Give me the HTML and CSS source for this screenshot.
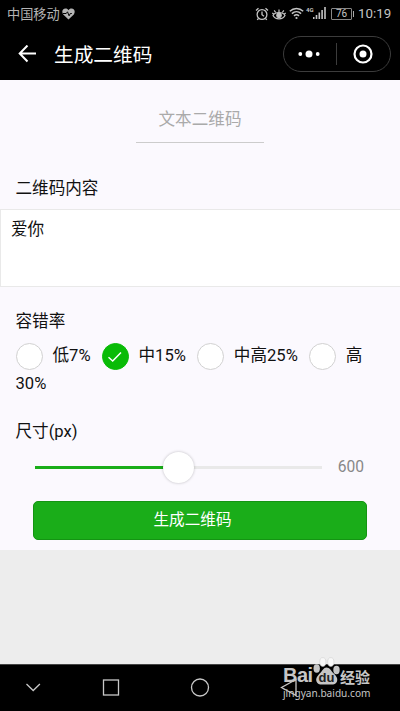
FILE: index.html
```html
<!DOCTYPE html>
<html lang="zh-CN">
<head>
  <meta charset="UTF-8">
  <meta name="viewport" content="width=device-width, initial-scale=1.0">
  <title>生成二维码</title>
  <link rel="stylesheet" href="styles.css">
</head>
<body>
  <div class="status-bar">
    <span class="carrier">中国移动</span>
    <svg class="heart" width="13" height="12" viewBox="0 0 13 12">
      <path d="M6.500 11.600 1.200 6.400C-.6 4 .4.5 3.500.5c1.400 0 2.400.7 3 1.700.6-1 1.600-1.700 3-1.700 3.100 0 4.100 3.500 2.300 5.900z" fill="#b4b4b4"/>
      <path d="M1 5.500h3.200l1.300-1.700 1.600 4 1.200-2.300h1.500" fill="none" stroke="#000" stroke-width="1"/>
    </svg>
    <div class="status-icons">
      <svg class="icon-alarm" width="14" height="14" viewBox="0 0 14 14" fill="none" stroke="#c4c4c4" stroke-width="1.300">
        <circle cx="7" cy="7.500" r="4.900"/>
        <path d="M7 4.500v3.200l2 1.500M1 3.600 3.500 1.300M13 3.600l-2.500-2.300M3.500 11.500l-1.300 1.400M10.500 11.500l1.300 1.400"/>
      </svg>
      <svg class="icon-eye" width="14" height="14" viewBox="0 0 14 14" fill="none" stroke="#c4c4c4" stroke-width="1.200">
        <path d="M1 8.500C3.200 4.500 10.800 4.500 13 8.500 10.800 12.900 3.200 12.900 1 8.500z"/>
        <circle cx="7" cy="8.300" r="2.200" fill="#c4c4c4"/>
        <path d="M7 5V2.500M3.700 5.500 2.200 3.300M10.300 5.500l1.500-2.200M1.800 7.300.3 6M12.200 7.300 13.700 6"/>
      </svg>
      <svg class="icon-wifi" width="15" height="13" viewBox="0 0 15 13" fill="none" stroke="#c4c4c4" stroke-width="1.500">
        <path d="M.8 4.300c3.900-3.800 9.500-3.800 13.400 0M2.900 6.600c2.700-2.600 6.500-2.600 9.200 0M5 8.900c1.500-1.400 3.500-1.400 5 0"/>
        <circle cx="7.500" cy="11" r="1.100" fill="#c4c4c4" stroke="none"/>
      </svg>
      <div class="signal">
        <span class="network">4G</span>
        <svg width="13" height="12" viewBox="0 0 13 12" fill="#c4c4c4">
          <path d="M0 10h1.500v2H0zM2.700 8h1.600v4H2.700zM5.500 5.500h1.600V12H5.500zM8.300 3h1.600v9H8.300zM11.200 0h1.600v12h-1.600z"/>
        </svg>
      </div>
      <span class="battery">76</span>
      <span class="clock">10:19</span>
    </div>
  </div>

  <header class="nav-bar">
    <svg class="back" width="19" height="18" viewBox="0 0 19 18" fill="none" stroke="#fff" stroke-width="2">
      <path d="M18 8.500H2M9.500.5 1.700 8.500l7.800 8"/>
    </svg>
    <h1>生成二维码</h1>
    <div class="capsule">
      <svg width="22" height="8" viewBox="0 0 22 8" fill="#fff">
        <circle cx="2.300" cy="4" r="1.900"/>
        <circle cx="11" cy="4" r="3.500"/>
        <circle cx="19.700" cy="4" r="1.900"/>
      </svg>
      <span class="divider"></span>
      <svg width="20" height="20" viewBox="0 0 20 20">
        <circle cx="10" cy="10" r="8.500" fill="none" stroke="#fff" stroke-width="2.200"/>
        <circle cx="10" cy="10" r="3.500" fill="#fff"/>
      </svg>
    </div>
  </header>

  <main>
    <div class="tab">文本二维码</div>
    <form class="qr-form">
      <h2>二维码内容</h2>
      <div class="content-box">爱你</div>
      <h2 class="level-title">容错率</h2>
      <div class="levels">
        <label><i class="radio"></i>低7%</label>
        <label><i class="radio checked"><svg width="16" height="12" viewBox="0 0 16 12" fill="none" stroke="#fff" stroke-width="1.500"><path d="M1.500 6.300 5.700 10 14 1.500"/></svg></i>中15%</label>
        <label><i class="radio"></i>中高25%</label>
        <label><i class="radio"></i>高<br>30%</label>
      </div>
      <h2 class="size-title">尺寸(px)</h2>
      <div class="slider">
        <div class="track"><div class="track-fill"></div><div class="handle"></div></div>
        <span class="size-value">600</span>
      </div>
      <button type="button" class="submit">生成二维码</button>
    </form>
  </main>

  <footer class="system-nav">
    <svg width="400" height="46" viewBox="0 0 400 46" fill="none" stroke="#c8c8c8" stroke-width="1.300">
      <path d="M26.500 19l6.700 6.500 6.700-6.500"/>
      <rect x="103.500" y="15" width="15" height="15"/>
      <circle cx="200" cy="22.500" r="8.500"/>
      <path d="M296 14.500v16l-14.500-8z"/>
    </svg>
    <div class="watermark">
      <div class="brand">
        <span class="bai">Bai</span>
        <svg class="paw" width="27" height="29" viewBox="0 0 27 29" fill="#c6c6c6">
          <ellipse cx="3.700" cy="11.500" rx="3.200" ry="4.200"/>
          <ellipse cx="9.800" cy="5" rx="3.100" ry="4.400" class="toe"/>
          <ellipse cx="17.800" cy="5" rx="3.100" ry="4.400" class="toe"/>
          <ellipse cx="23.500" cy="13" rx="3.200" ry="4.200"/>
          <path d="M13.500 10.500c3 0 4.500 3 6.500 5.300 3.500 3.300 5 5.700 4 8.700-1.400 4-5.500 3-10.500 3s-8.500 1-10-3c-1-3 .8-5.400 3.700-8.400 2.200-2.400 3.300-5.600 6.300-5.600z"/>
          <text x="13.500" y="25" text-anchor="middle" class="du">du</text>
        </svg>
        <span class="jingyan">经验</span>
      </div>
      <div class="url">jingyan.baidu.com</div>
    </div>
  </footer>
</body>
</html>
```

FILE: styles.css
```css
:root {
  --main-font: Roboto, "Noto Sans CJK SC", sans-serif;
  --page-color: #fbf9fe;
  --green: #1aad19;
  --status-color: #c4c4c4;
}

html {
  box-sizing: border-box;
  font-family: var(--main-font);
  font-size: 16.6px;
}

*,
*::before,
*::after {
  box-sizing: inherit;
}

body {
  margin: 0;
  height: 711px;
  display: flex;
  flex-direction: column;
  overflow: hidden;
  background-color: #ededed;
  color: #111;
}

h1,
h2 {
  margin: 0;
  font-weight: normal;
}

.status-bar {
  display: flex;
  align-items: center;
  height: 28px;
  padding: 0 9px 0 7px;
  background-color: #000;
  color: var(--status-color);
}

.carrier {
  margin-top: -2px;
  font-size: 13.2px;
  color: #b4b4b4;
}

.heart {
  margin-left: 2px;
}

.status-icons {
  display: flex;
  align-items: center;
  margin-left: auto;
}

.icon-alarm,
.icon-eye,
.icon-wifi {
  margin-top: -1px;
}

.icon-eye {
  margin-left: 3px;
}

.icon-wifi {
  margin-left: 3px;
}

.signal {
  display: flex;
  align-items: flex-end;
  margin: -2px 0 0 2px;
}

.network {
  align-self: flex-start;
  width: 7px;
  font-size: 6px;
  line-height: 6px;
  font-weight: bold;
}

.battery {
  position: relative;
  width: 21px;
  height: 12px;
  margin: -1px 6px 0 5px;
  border: 1px solid #888;
  border-radius: 1px;
  font-size: 10px;
  line-height: 10px;
  text-align: center;
}

.battery::after {
  content: "";
  position: absolute;
  right: -3px;
  top: 2px;
  width: 1px;
  height: 6px;
  background-color: #aaa;
}

.clock {
  width: 33px;
  font-size: 13.3px;
  line-height: 16px;
}

.nav-bar {
  display: flex;
  align-items: center;
  height: 52px;
  padding: 0 9.5px 0 18px;
  background-color: #000;
  color: #fff;
}

.nav-bar h1 {
  margin-left: 17px;
  padding-top: 3px;
  font-size: 19.7px;
  line-height: 28px;
}

.capsule {
  display: flex;
  align-items: center;
  width: 107.5px;
  height: 36px;
  margin: -1px 0 0 auto;
  padding: 0 14px;
  border: 1px solid #3c3c3c;
  border-radius: 18px;
}

.divider {
  width: 1px;
  height: 22px;
  margin: 0 16px;
  background-color: #3c3c3c;
}

main {
  height: 470px;
  padding-top: 20px;
  background-color: var(--page-color);
}

.tab {
  width: 128px;
  height: 43px;
  margin: 0 auto;
  padding-top: 8px;
  border-bottom: 1px solid #ccc;
  color: #aaa;
  line-height: 24px;
  text-align: center;
}

.qr-form h2 {
  padding-left: 15.5px;
  font-size: 1rem;
  line-height: 24px;
}

.qr-form h2:first-child {
  margin-top: 34px;
}

.content-box {
  height: 78px;
  margin-top: 8px;
  padding: 7px 10px;
  border: 1px solid #e9e9e9;
  border-right: none;
  background-color: #fff;
  line-height: 26px;
}

.qr-form .level-title {
  margin-top: 23px;
}

.levels {
  height: 54px;
  margin-top: 8px;
  padding: 0 15.5px;
  line-height: 27px;
}

.levels label {
  margin-right: 6.8px;
}

.radio {
  display: inline-flex;
  align-items: center;
  justify-content: center;
  width: 27px;
  height: 27px;
  margin-right: 10px;
  border: 1px solid #d1d1d1;
  border-radius: 50%;
  background-color: #fff;
  vertical-align: middle;
}

.radio.checked {
  border-color: #09bb07;
  background-color: #09bb07;
}

.qr-form .size-title {
  margin-top: 24px;
}

.slider {
  display: flex;
  align-items: center;
  height: 32px;
  margin-top: 7px;
  padding: 0 36px 0 35px;
}

.track {
  position: relative;
  width: 287px;
  height: 3px;
  background-color: #e9e9e9;
}

.track-fill {
  width: 50%;
  height: 3px;
  background-color: var(--green);
}

.handle {
  position: absolute;
  top: -14px;
  left: 128px;
  width: 31px;
  height: 31px;
  border-radius: 50%;
  background-color: #fff;
  box-shadow: 0 0 3px rgba(0, 0, 0, 0.25);
}

.size-value {
  margin-left: auto;
  color: #888;
  font-size: 15.6px;
}

.submit {
  display: block;
  width: 334px;
  height: 39px;
  margin: 18px 0 0 33px;
  padding: 0 15px 5px 0;
  border: 1px solid #149413;
  border-radius: 5px;
  background-color: var(--green);
  color: #fff;
  font-family: var(--main-font);
  font-size: 15.6px;
}

.system-nav {
  position: relative;
  height: 47px;
  margin-top: auto;
  border-top: 1px solid #444;
  background-color: #000;
}

.system-nav > svg {
  display: block;
}

.watermark {
  position: absolute;
  top: -8px;
  left: 283px;
  width: 92px;
  color: #c6c6c6;
}

.brand {
  display: flex;
  align-items: flex-end;
  height: 29px;
}

.bai {
  flex: none;
  width: 30px;
  font: bold 20px/21px "Liberation Sans", sans-serif;
  letter-spacing: -0.5px;
}

.paw {
  flex: none;
}

.toe {
  fill: #f8f8f8;
  stroke: #d0d0d0;
  stroke-width: 0.6;
}

.du {
  font: bold 13px "Liberation Sans", sans-serif;
  fill: #222;
}

.jingyan {
  font-size: 15px;
  font-weight: bold;
  line-height: 16px;
}

.url {
  font: 10.1px/15px "Noto Sans", sans-serif;
}
```
